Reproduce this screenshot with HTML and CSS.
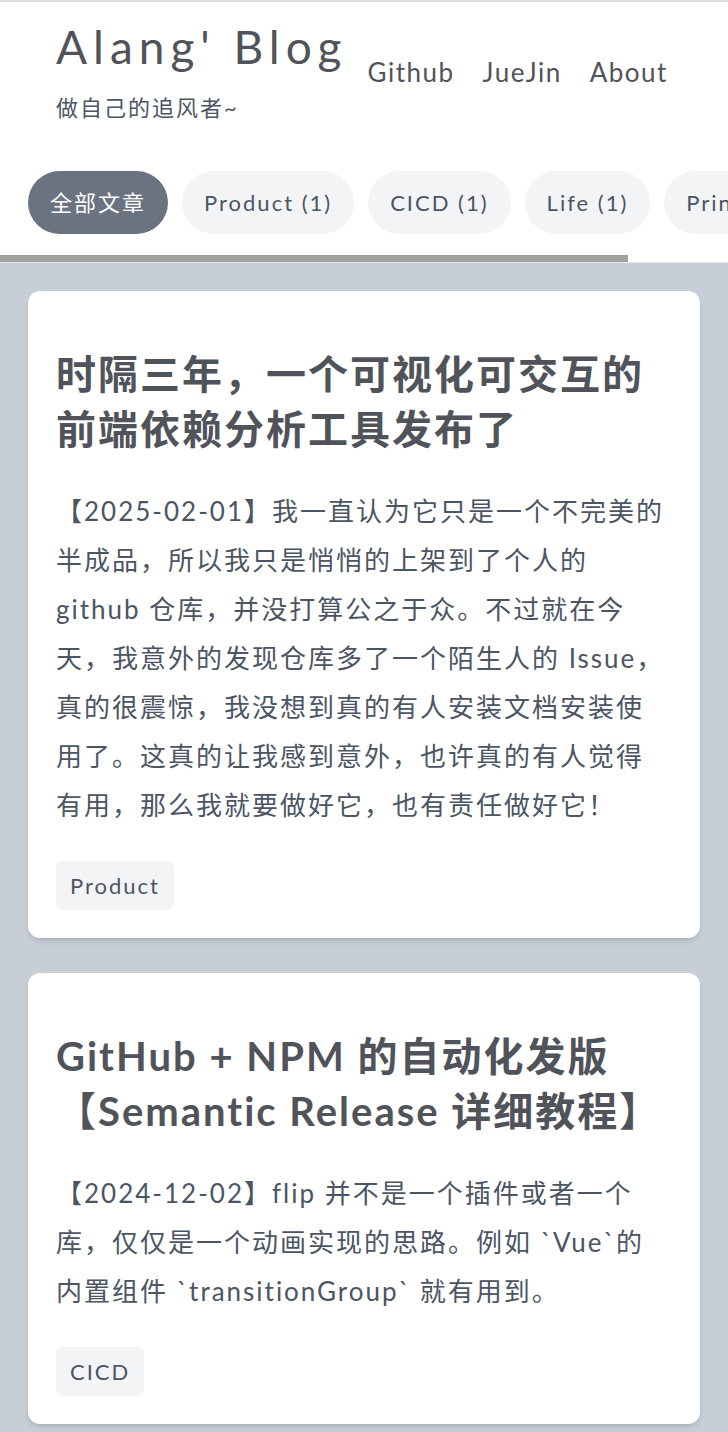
FILE: index.html
```html
<!DOCTYPE html>
<html lang="zh-CN">
<head>
<meta charset="utf-8">
<title>Alang' Blog</title>
<link rel="stylesheet" href="styles.css">
</head>
<body>
<header class="site-header">
  <div class="brand">
    <div class="brand-row">
      <h1 class="site-title">Alang' Blog</h1>
      <nav class="site-nav">
        <a href="#">Github</a>
        <a href="#">JueJin</a>
        <a href="#">About</a>
      </nav>
    </div>
    <p class="tagline">做自己的追风者~</p>
  </div>
  <div class="categories">
    <a class="pill pill-active" href="#">全部文章</a>
    <a class="pill" href="#">Product (1)</a>
    <a class="pill" href="#">CICD (1)</a>
    <a class="pill" href="#">Life (1)</a>
    <a class="pill" href="#">Principle (1)</a>
  </div>
  <div class="scroll-track"><div class="scroll-thumb" style="width: 86.3%"></div></div>
</header>
<main class="posts">
  <article class="card">
    <h2 class="card-title">时隔三年，一个可视化可交互的前端依赖分析工具发布了</h2>
    <p class="card-excerpt">【2025-02-01】我一直认为它只是一个不完美的<br>半成品，所以我只是悄悄的上架到了个人的<br>github 仓库，并没打算公之于众。不过就在今<br>天，我意外的发现仓库多了一个陌生人的 Issue，<br>真的很震惊，我没想到真的有人安装文档安装使<br>用了。这真的让我感到意外，也许真的有人觉得<br>有用，那么我就要做好它，也有责任做好它！</p>
    <div class="tags"><span class="tag">Product</span></div>
  </article>
  <article class="card">
    <h2 class="card-title">GitHub + NPM 的自动化发版【Semantic Release 详细教程】</h2>
    <p class="card-excerpt">【2024-12-02】flip 并不是一个插件或者一个<br>库，仅仅是一个动画实现的思路。例如 `Vue`的<br>内置组件 `transitionGroup` 就有用到。</p>
    <div class="tags"><span class="tag">CICD</span></div>
  </article>
</main>
</body>
</html>
```

FILE: styles.css
```css
html {
  background: #c8ced6;
}

body {
  margin: 0;
  font-family: Lato, "Noto Sans CJK SC", sans-serif;
  color: #4b5563;
}

a {
  color: inherit;
  text-decoration: none;
}

.site-header {
  background: #ffffff;
  border-top: 2px solid #dcdfe4;
  border-bottom: 1px solid #e5e7eb;
}

.brand {
  padding: 17px 28px 0 56px;
}

.brand-row {
  display: flex;
  align-items: flex-start;
}

.site-title {
  margin: 0;
  font-size: 46px;
  line-height: 56px;
  font-weight: 400;
  letter-spacing: 6px;
  white-space: nowrap;
  color: #50545a;
}

.site-nav {
  display: flex;
  gap: 28px;
  margin: 35px 0 0 20px;
}

.site-nav a {
  font-size: 26px;
  line-height: 36px;
  letter-spacing: 1.5px;
  white-space: nowrap;
  color: #50545a;
}

.tagline {
  margin: 3px 0 0;
  font-size: 22px;
  line-height: 30px;
  letter-spacing: 2px;
}

.categories {
  display: flex;
  gap: 14px;
  overflow-x: auto;
  scrollbar-width: none;
  padding: 48px 0 21px 28px;
}

.scroll-track {
  height: 7px;
  background: #ffffff;
}

.scroll-thumb {
  height: 100%;
  background: #a1a1a1;
}

.pill {
  flex-shrink: 0;
  padding: 15px 22px;
  font-size: 22px;
  line-height: 33px;
  letter-spacing: 2px;
  white-space: nowrap;
  border-radius: 999px;
  background: #f3f4f6;
  color: #4b5563;
}

.pill-active {
  background: #6b7280;
  color: #ffffff;
}

.posts {
  display: flex;
  flex-direction: column;
  gap: 35px;
  padding: 28px 28px 40px;
}

.card {
  background: #ffffff;
  border-radius: 12px;
  padding: 56px 28px 28px;
  box-shadow: 0 4px 6px -1px rgba(0, 0, 0, 0.1), 0 2px 4px -2px rgba(0, 0, 0, 0.1);
}

.card-title {
  margin: 0;
  font-size: 40px;
  line-height: 55px;
  font-weight: 700;
  letter-spacing: 2px;
  color: #50545a;
}

.card-excerpt {
  margin: 30px 0 0;
  font-size: 26px;
  line-height: 49px;
  letter-spacing: 2px;
}

.tags {
  display: flex;
  gap: 12px;
  margin-top: 31px;
}

.tag {
  padding: 8px 14px;
  font-size: 22px;
  line-height: 33px;
  letter-spacing: 2px;
  border-radius: 6px;
  background: #f3f4f6;
}
```
